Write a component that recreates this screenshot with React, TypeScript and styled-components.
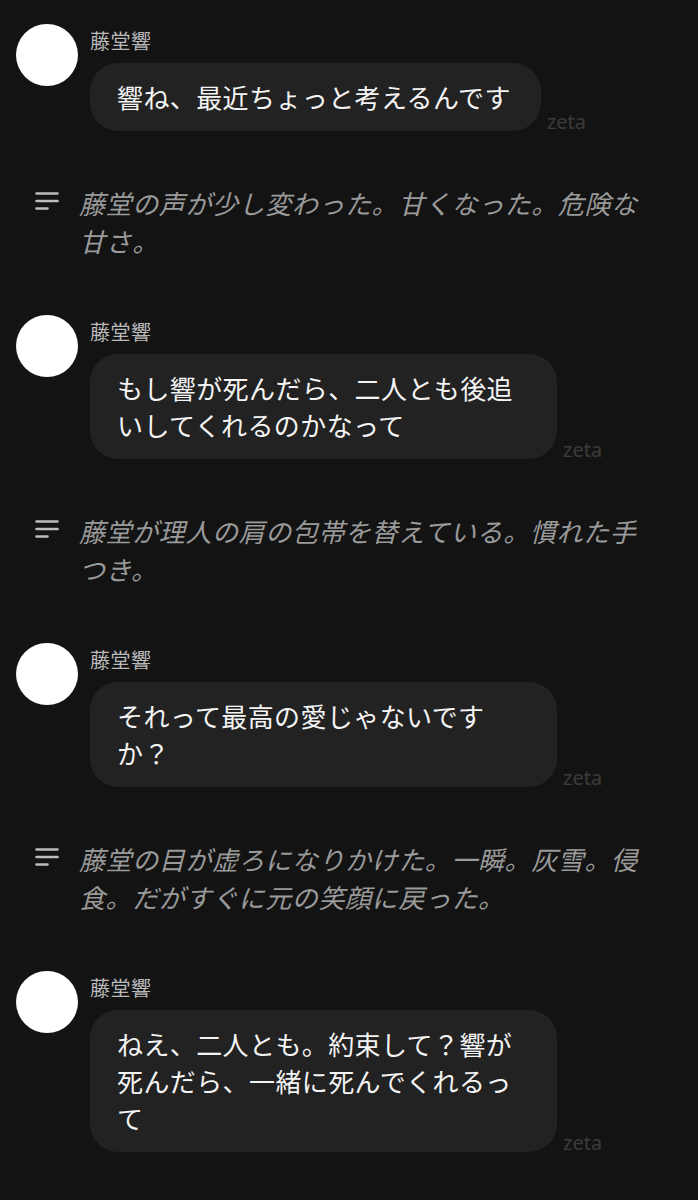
import styled, { createGlobalStyle } from "styled-components";

type Entry =
  | { kind: "message"; name: string; text: string }
  | { kind: "narration"; text: string };

const Entries: Entry[] = [
  { kind: "message", name: "藤堂響", text: "響ね、最近ちょっと考えるんです" },
  { kind: "narration", text: "藤堂の声が少し変わった。甘くなった。危険な甘さ。" },
  { kind: "message", name: "藤堂響", text: "もし響が死んだら、二人とも後追いしてくれるのかなって" },
  { kind: "narration", text: "藤堂が理人の肩の包帯を替えている。慣れた手つき。" },
  { kind: "message", name: "藤堂響", text: "それって最高の愛じゃないですか？" },
  { kind: "narration", text: "藤堂の目が虚ろになりかけた。一瞬。灰雪。侵食。だがすぐに元の笑顔に戻った。" },
  { kind: "message", name: "藤堂響", text: "ねえ、二人とも。約束して？響が死んだら、一緒に死んでくれるって" },
];

const GlobalStyle = createGlobalStyle`
  html, body {
    margin: 0;
    padding: 0;
    background: #131313;
  }
  body {
    font-family: "Noto Sans CJK JP", "Noto Sans", sans-serif;
  }
`;

const Page = styled.main`
  display: flex;
  flex-direction: column;
  min-height: 1200px;
  padding: 24px 0 40px;
  box-sizing: border-box;
  background: #131313;
`;

const MessageRow = styled.section`
  display: flex;
  align-items: flex-start;
  padding-left: 16px;
`;

const Avatar = styled.div`
  width: 62px;
  height: 62px;
  flex-shrink: 0;
  border-radius: 50%;
  background: #ffffff;
`;

const MessageBody = styled.div`
  display: flex;
  flex-direction: column;
  margin-left: 12px;
`;

const Name = styled.span`
  margin-top: 4px;
  font-size: 20px;
  line-height: 26px;
  letter-spacing: 0.5px;
  color: #b9b9b9;
`;

const BubbleLine = styled.div`
  display: flex;
  align-items: flex-end;
  gap: 6px;
  margin-top: 9px;
`;

const Bubble = styled.div`
  max-width: 467px;
  box-sizing: border-box;
  padding: 15px 30px 16px 27px;
  border-radius: 28px;
  background: #222222;
  color: #f4f4f4;
  font-size: 26px;
  line-height: 37px;
  letter-spacing: 0.4px;
`;

const Zeta = styled.span`
  margin-bottom: -2px;
  font-family: "Noto Sans", Inter, sans-serif;
  font-size: 20px;
  line-height: 22px;
  color: #3b3b3b;
`;

const Narration = styled.section`
  display: flex;
  align-items: flex-start;
  gap: 20px;
  margin: 53px 0 55px;
  padding: 0 50px 0 35px;
`;

const NarrationIcon = styled.svg`
  flex-shrink: 0;
  margin-top: 5px;
`;

const NarrationText = styled.p`
  margin: 0;
  font-size: 26px;
  line-height: 38px;
  letter-spacing: 0.6px;
  font-style: italic;
  color: #9a9a9a;
`;

function LinesIcon() {
  return (
    <NarrationIcon width="24" height="24" viewBox="0 0 24 24" fill="none">
      <path
        d="M1.5 4.5h21M1.5 12h21M1.5 19.5h11"
        stroke="#bdbdbd"
        strokeWidth="2.6"
        strokeLinecap="round"
      />
    </NarrationIcon>
  );
}

export default function App() {
  return (
    <>
      <GlobalStyle />
      <Page>
        {Entries.map((entry, i) =>
          entry.kind === "message" ? (
            <MessageRow key={i}>
              <Avatar />
              <MessageBody>
                <Name>{entry.name}</Name>
                <BubbleLine>
                  <Bubble>{entry.text}</Bubble>
                  <Zeta>zeta</Zeta>
                </BubbleLine>
              </MessageBody>
            </MessageRow>
          ) : (
            <Narration key={i}>
              <LinesIcon />
              <NarrationText>{entry.text}</NarrationText>
            </Narration>
          )
        )}
      </Page>
    </>
  );
}
